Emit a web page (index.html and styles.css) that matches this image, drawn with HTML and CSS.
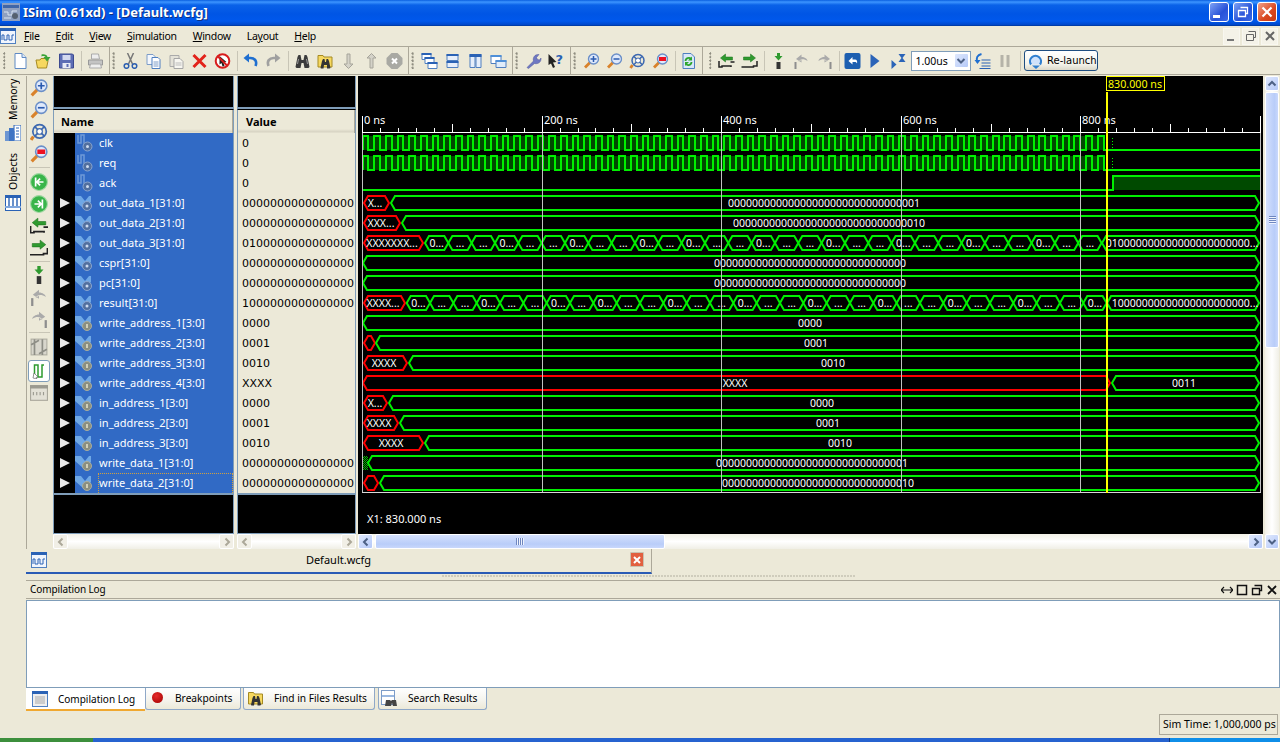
FILE: index.html
```html
<!DOCTYPE html>
<html>
<head>
<meta charset="utf-8">
<title>ISim (0.61xd) - [Default.wcfg]</title>
<link rel="stylesheet" href="styles.css">
<script src="wave.js"></script>
</head>
<body>

<svg class="defs" width="0" height="0">
  <symbol id="i-new" viewBox="0 0 16 16"><path d="M2.5.5h7l4 4v11h-11z" fill="#fff" stroke="#5f8ac4"/><path d="M9.5.5v4h4" fill="#dce8f8" stroke="#5f8ac4"/></symbol>
  <symbol id="i-open" viewBox="0 0 16 16"><path d="M.5 7h4l1-1.5h7V8l-1.5 7H2z" fill="#f6d860" stroke="#a58a22"/><path d="M6 1.5c3.5-.5 5.500.5 6 2.500h3l-3.500 4.500L8 4h2c-.5-1-2-1.200-4-.5z" fill="#39a336"/></symbol>
  <symbol id="i-save" viewBox="0 0 16 16"><path d="M1 1h13l1 1v13H1z" fill="#5d6db5" stroke="#3c4a90"/><rect x="4" y="2" width="8" height="5" fill="#d3d9f0"/><rect x="4" y="10" width="8" height="5" fill="#e8eaf5"/><rect x="8" y="11" width="2" height="3" fill="#5d6db5"/></symbol>
  <symbol id="i-print" viewBox="0 0 16 16"><path d="M4 1h7l1 5H4z" fill="#eee" stroke="#aaa"/><path d="M1 7h14v5H1z" fill="#c4c4c4" stroke="#999"/><path d="M3 11h10l1 4H2z" fill="#eee" stroke="#aaa"/></symbol>
  <symbol id="i-cut" viewBox="0 0 16 16"><path d="M5 0l5 11M11 0L6 11" stroke="#777" stroke-width="1.5" fill="none"/><circle cx="4" cy="13" r="2.3" fill="none" stroke="#2d5fb0" stroke-width="1.5"/><circle cx="12" cy="13" r="2.3" fill="none" stroke="#2d5fb0" stroke-width="1.5"/></symbol>
  <symbol id="i-copy" viewBox="0 0 16 16"><path d="M1.5 1.5h6l2 2v8h-8z" fill="#f4f7fc" stroke="#7c9cc8"/><path d="M6.5 4.500h6l2 2v9h-8z" fill="#fff" stroke="#4f7fc0"/><path d="M8 9h5M8 11h5M8 13h5" stroke="#7c9cc8"/></symbol>
  <symbol id="i-paste" viewBox="0 0 16 16"><path d="M1.5 2.500h9v11h-9z" fill="#e4e2d8" stroke="#aaa"/><path d="M5.5 5.500h6l3 3v7h-9z" fill="#f7f6f0" stroke="#a5a5a5"/><path d="M7 10h6M7 12h6" stroke="#bbb"/></symbol>
  <symbol id="i-del" viewBox="0 0 16 16"><path d="M2 2l12 12M14 2L2 14" stroke="#e2231a" stroke-width="3" fill="none"/></symbol>
  <symbol id="i-nobp" viewBox="0 0 16 16"><circle cx="8" cy="8" r="6.8" fill="#fff" stroke="#d81e1e" stroke-width="2"/><path d="M5 3l7 6-3 .5 1 3.500-2 .5-1-3.500-2 1.500z" fill="#222"/><path d="M3 3l10 10" stroke="#d81e1e" stroke-width="2"/></symbol>
  <symbol id="i-undo" viewBox="0 0 16 16"><path d="M13 13c2-5-1-8-5-8H5" stroke="#1f6fd0" stroke-width="2.6" fill="none"/><path d="M6.5.5L1 5l5.500 4.500z" fill="#1f6fd0"/></symbol>
  <symbol id="i-redo" viewBox="0 0 16 16"><path d="M3 13C1 8 4 5 8 5h3" stroke="#a0a0a0" stroke-width="2.6" fill="none"/><path d="M9.5.5L15 5l-5.500 4.500z" fill="#a0a0a0"/></symbol>
  <symbol id="i-bino" viewBox="0 0 16 16"><path d="M1 14l2-10 1-2h2l1 5h2l1-5h2l1 2 2 10-1 1h-4l-1-5H7l-1 5H2z" fill="#3b3b3b"/><path d="M3 11l1-5M12 6l1 5" stroke="#9a9a9a" fill="none"/></symbol>
  <symbol id="i-fbino" viewBox="0 0 16 16"><path d="M.5 2.500h5l1 1.500h8v10H.5z" fill="#f6d860" stroke="#a58a22"/><path d="M3 15l1.500-7 1-2h1.500l.5 3h1l.5-3h1.500l1 2 1.500 7-1 .5h-2.500L9.500 12h-3L6 15.500H3.500z" fill="#333"/></symbol>
  <symbol id="i-down" viewBox="0 0 16 16"><path d="M6.5 1h3v10h3L8 15.500 3.500 11h3z" fill="#d4d2c8" stroke="#a6a49a"/></symbol>
  <symbol id="i-up" viewBox="0 0 16 16"><path d="M6.5 15h3V5h3L8 .5 3.500 5h3z" fill="#d4d2c8" stroke="#a6a49a"/></symbol>
  <symbol id="i-stop" viewBox="0 0 16 16"><path d="M5 0h6l5 5v6l-5 5H5l-5-5V5z" fill="#a9a9a3"/><path d="M5.5 5.500l5 5M10.500 5.500l-5 5" stroke="#fff" stroke-width="2"/></symbol>
  <symbol id="i-cascade" viewBox="0 0 16 16"><path d="M.5.5h9v6h-9z" fill="#fff" stroke="#4f7fc0"/><rect y="0" width="10" height="2" fill="#2a62b5"/><path d="M3.5 4.500h9v6h-9z" fill="#fff" stroke="#4f7fc0"/><rect x="3" y="4" width="10" height="2" fill="#2a62b5"/><path d="M6.5 9.500h9v6h-9z" fill="#fff" stroke="#4f7fc0"/><rect x="6" y="9" width="10" height="2" fill="#2a62b5"/></symbol>
  <symbol id="i-tileh" viewBox="0 0 16 16"><path d="M2.5 1.500h11v6h-11zM2.500 8.500h11v6h-11z" fill="#e6eefa" stroke="#4f7fc0"/><rect x="2" y="1" width="12" height="2" fill="#2a62b5"/><rect x="2" y="8" width="12" height="2" fill="#2a62b5"/></symbol>
  <symbol id="i-tilev" viewBox="0 0 16 16"><path d="M2.5 1.500h5v13h-5zM8.500 1.500h5v13h-5z" fill="#e6eefa" stroke="#4f7fc0"/><rect x="2" y="1" width="12" height="3" fill="#2a62b5"/></symbol>
  <symbol id="i-wins" viewBox="0 0 16 16"><path d="M.5 2.500h10v8H.5z" fill="#fff" stroke="#4f7fc0"/><rect y="2" width="11" height="2" fill="#4f90d8"/><path d="M5.5 7.500h10v7h-10z" fill="#e0ecfa" stroke="#4f7fc0"/><rect x="5" y="7" width="11" height="2" fill="#4f90d8"/></symbol>
  <symbol id="i-wrench" viewBox="0 0 16 16"><path d="M1.5 14.500L8 8c-1-3 1-7 5.500-6.500L11 4.500l1 2 2 .5L15.500 5c.5 4-3 6.500-6.500 5.500L3 15.500z" fill="#6f78c2" stroke="#4d5598" stroke-width=".5"/></symbol>
  <symbol id="i-lens" viewBox="0 0 16 16"><path d="M6.5 9.500L1.500 14.500" stroke="#d9822b" stroke-width="2.8"/><circle cx="10" cy="6" r="5" fill="#dfe9fb" stroke="#6b8fc8" stroke-width="1.4"/></symbol>
  <symbol id="i-zin" viewBox="0 0 16 16"><use href="#i-lens"/><path d="M7 6h6M10 3v6" stroke="#2b5bb0" stroke-width="1.5"/></symbol>
  <symbol id="i-zout" viewBox="0 0 16 16"><use href="#i-lens"/><path d="M7 6h6" stroke="#2b5bb0" stroke-width="1.5"/></symbol>
  <symbol id="i-zfit" viewBox="0 0 16 16"><path d="M3 12L1 15" stroke="#d9822b" stroke-width="2.8"/><circle cx="8.500" cy="7.500" r="6" fill="none" stroke="#3d68b0" stroke-width="1.5"/><circle cx="8.500" cy="7.500" r="2.500" fill="#fff" stroke="#3d68b0"/><path d="M4.500 3.500l2.500 2.500M12.500 3.500L10 6M4.500 11.500L7 9M12.500 11.500L10 9" stroke="#3d68b0" stroke-width="1.5"/></symbol>
  <symbol id="i-zred" viewBox="0 0 16 16"><use href="#i-lens"/><rect x="6.500" y="4" width="7" height="4" fill="#ee1122"/></symbol>
  <symbol id="i-refresh" viewBox="0 0 16 16"><path d="M2.5.5h8l3.500 3.500v11.500H2.500z" fill="#d9e7f9" stroke="#4f7fc0"/><path d="M5 8c0-3 4-4 5.500-2M11 9c0 3-4 4-5.500 2" stroke="#2da52d" stroke-width="1.8" fill="none"/><path d="M11.5 3.500v4h-4zM4.500 13v-4h4z" fill="#2da52d"/></symbol>
  <symbol id="i-stepl" viewBox="0 0 16 16"><path d="M.5 8v6h3v-1h9v1M12 9h4" stroke="#222" stroke-width="1.5" fill="none"/><path d="M7 1L2 5l5 4V7h7V4H7z" fill="#2f9a2f" stroke="#1b701b" stroke-width=".5"/></symbol>
  <symbol id="i-stepr" viewBox="0 0 16 16"><path d="M0 14h12v-1h3.500V8" stroke="#222" stroke-width="1.5" fill="none"/><path d="M9 1l5 4-5 4V7H2V4h7z" fill="#2f9a2f" stroke="#1b701b" stroke-width=".5"/></symbol>
  <symbol id="i-dnmark" viewBox="0 0 16 16"><path d="M6.5 0h3v3h2.500L8 7.500 4 3h2.500z" fill="#2f9a2f"/><rect x="6" y="9" width="4" height="7" fill="#333"/></symbol>
  <symbol id="i-curvel" viewBox="0 0 16 16"><rect x="1" y="9" width="2" height="7" fill="#8e8e8e"/><path d="M5 9c1-3 5-4 9-1 0-2-3-4-6-4V1.500L2.500 6 8 9.500V7c-1 0-2 1-3 2z" fill="#aaa"/></symbol>
  <symbol id="i-curver" viewBox="0 0 16 16"><rect x="13" y="9" width="2" height="7" fill="#8e8e8e"/><path d="M11 9c-1-3-5-4-9-1 0-2 3-4 6-4V1.500L13.500 6 8 9.500V7c1 0 2 1 3 2z" fill="#aaa"/></symbol>
  <symbol id="i-restart" viewBox="0 0 16 16"><rect width="16" height="16" rx="2" fill="#1d5fb0"/><path d="M4 8l4-4v2.500h2.500c2 0 2.500 2 2 4-.5-1-1-1.500-2-1.500H8V11.500z" fill="#fff"/></symbol>
  <symbol id="i-run" viewBox="0 0 16 16"><path d="M3 1l9 7-9 7z" fill="#2b64b8"/></symbol>
  <symbol id="i-runfor" viewBox="0 0 16 16"><path d="M1 7l5 4.500L1 16z" fill="#2b64b8"/><path d="M8 1h7l-3 4 3 4H8l3-4z" fill="#2b64b8"/></symbol>
  <symbol id="i-stepin" viewBox="0 0 16 16"><path d="M7 1C3 2 1 5 3 9" stroke="#1f6fd0" stroke-width="2" fill="none"/><path d="M0 7h6l-3 4z" fill="#1f6fd0"/><path d="M7 7h9M7 10h9M7 13h9M5 15.500h11" stroke="#2a62b5"/></symbol>
  <symbol id="i-pause" viewBox="0 0 16 16"><rect x="3" y="2" width="3" height="12" fill="#b5b3a8"/><rect x="9" y="2" width="3" height="12" fill="#b5b3a8"/></symbol>
  <symbol id="i-relaunch" viewBox="0 0 16 16"><path d="M3 11.500a5.500 5.500 0 1 1 9 0" fill="#cfe2fb" stroke="#2f7fd0" stroke-width="2.2"/><path d="M8 16l-4-3.500h8z" fill="#2f7fd0"/></symbol>
  <symbol id="i-gol" viewBox="0 0 16 16"><circle cx="8" cy="8" r="7.5" fill="#39b54a" stroke="#a5d9a5"/><path d="M5 4v8M12 8H6M9 5L6 8l3 3" stroke="#fff" stroke-width="1.5" fill="none"/></symbol>
  <symbol id="i-gor" viewBox="0 0 16 16"><circle cx="8" cy="8" r="7.5" fill="#39b54a" stroke="#a5d9a5"/><path d="M11 4v8M4 8h6M7 5l3 3-3 3" stroke="#fff" stroke-width="1.5" fill="none"/></symbol>
  <symbol id="i-snap" viewBox="0 0 16 16"><rect x="1" y="1" width="14" height="14" fill="#d8d6cc" stroke="#b0aea2"/><path d="M4 1v14M11 1v14M1 6l7-4M15 10l-7 4" stroke="#8e8e86" fill="none" stroke-width="1.5"/></symbol>
  <symbol id="i-wave" viewBox="0 0 16 16"><path d="M3.500 14V2H7v12h4V2h2" stroke="#2e9a2e" stroke-width="1.5" fill="none"/><path d="M2 15l1-5 4 4-2 .5 1 1.500z" fill="#fff" stroke="#555" stroke-width=".6"/></symbol>
  <symbol id="i-marker" viewBox="0 0 16 16"><rect x=".5" y="1.500" width="15" height="13" fill="#e3e1d6" stroke="#aaa89c"/><rect y="1" width="16" height="3" fill="#9b9a90"/><path d="M3 7v3M6 7v3M9 7v3M12 7v3" stroke="#9b9a90"/></symbol>
  <symbol id="i-wcfg" viewBox="0 0 16 16"><rect x=".5" y=".5" width="15" height="15" fill="#f0f5fd" stroke="#4f7fc0"/><rect width="16" height="3" fill="#2a62b5"/><path d="M2 12V7h2v5h3V7h2v5h3V7h2" stroke="#2a62b5" fill="none"/></symbol>
  <symbol id="i-mem" viewBox="0 0 16 16"><rect x="9" y="0" width="7" height="16" fill="#fff" stroke="#2a62b5"/><rect x="0" y="6" width="10" height="10" fill="#6d96d2"/><rect x="4" y="3" width="5" height="13" fill="#3f74c4"/><path d="M11 3h3M11 6h3M11 9h3M11 12h3" stroke="#2a62b5"/></symbol>
  <symbol id="i-obj" viewBox="0 0 16 16"><rect x=".5" y=".5" width="15" height="15" fill="#fff" stroke="#2a62b5"/><rect width="16" height="3" fill="#2a62b5"/><path d="M4 3v10M8 3v10M12 3v10" stroke="#2a62b5" stroke-width="1.4"/><rect y="11" width="16" height="2" fill="#7fa6dc"/></symbol>
  <symbol id="i-sig" viewBox="0 0 18 18"><path d="M3 1v8h3V1h3v10" stroke="#6f9ad8" stroke-width="1.5" fill="none"/><circle cx="12.500" cy="12.500" r="4.500" fill="#52709f" stroke="#8aa5cf"/><circle cx="12.500" cy="12.500" r="1.500" fill="#cfdcf0"/></symbol>
  <symbol id="i-bus" viewBox="0 0 18 18"><path d="M0 2h6l4 5 4-5h2v6l-5 6H8L0 7z" fill="#6fa8e6"/><circle cx="12" cy="12" r="4.500" fill="#52709f" stroke="#8aa5cf"/><circle cx="12" cy="12" r="1.500" fill="#cfdcf0"/></symbol>
  <symbol id="i-num" viewBox="0 0 18 18"><path d="M0 2h6l4 5 4-5h2v6l-5 6H8L0 7z" fill="#6fa8e6"/><circle cx="12" cy="12" r="4.500" fill="#8b8f80" stroke="#a9ad9e"/><path d="M12 10v4" stroke="#e8e6cc" stroke-width="1.5"/></symbol>
  <symbol id="i-log" viewBox="0 0 16 16"><rect x=".5" y=".5" width="15" height="15" fill="#eee" stroke="#4f7fc0"/><rect width="16" height="3" fill="#2a62b5"/><path d="M3 6h10M3 8h10M3 10h10M3 12h10" stroke="#aaa"/></symbol>
  <symbol id="i-search" viewBox="0 0 16 16"><rect x=".5" y=".5" width="13" height="14" fill="#fff" stroke="#7c9cc8"/><rect x="1" y="5" width="12" height="2" fill="#9ab8e0"/><path d="M5 10h4l1 1 1-1h4l1 6h-4l-1-3-1 3H4z" fill="#444"/></symbol>
</svg>

<div class="titlebar">
  <svg class="title-ic" viewBox="0 0 18 18"><rect width="18" height="18" fill="#8fa0c0"/><rect x="1" y="2" width="16" height="3" fill="#3f66a8"/><path d="M2 9h4v3h4V8h5M2 15h7" stroke="#d8e2f0" fill="none"/><circle cx="13" cy="13" r="3" fill="#55606f"/></svg>
  <span class="title-text">ISim (0.61xd) - [Default.wcfg]</span>
  <span class="win-btn"><span class="glyph-min"></span></span>
  <span class="win-btn"><svg viewBox="0 0 12 12" width="12" height="12"><path d="M3.5 1.500h7v6h-2M1.500 4.500h7v6h-7z" fill="none" stroke="#fff" stroke-width="1.3"/></svg></span>
  <span class="win-btn win-close"><svg viewBox="0 0 12 12" width="12" height="12"><path d="M1.5 1.500l9 9M10.500 1.500l-9 9" stroke="#fff" stroke-width="2.2"/></svg></span>
</div>

<div class="menubar">
  <svg class="menu-ic"><use href="#i-wcfg"/></svg>
  <span class="menu-item"><u>F</u>ile</span>
  <span class="menu-item"><u>E</u>dit</span>
  <span class="menu-item"><u>V</u>iew</span>
  <span class="menu-item"><u>S</u>imulation</span>
  <span class="menu-item"><u>W</u>indow</span>
  <span class="menu-item">La<u>y</u>out</span>
  <span class="menu-item"><u>H</u>elp</span>
  <span class="mdi">
    <span class="mdi-btn"><svg viewBox="0 0 12 12" width="12" height="12"><path d="M1 10h7" stroke="#777" stroke-width="2"/></svg></span>
    <span class="mdi-btn"><svg viewBox="0 0 12 12" width="12" height="12"><path d="M3.5 1.500h7v6h-2M1.500 4.500h7v6h-7z" fill="none" stroke="#666"/></svg></span>
    <span class="mdi-btn"><svg viewBox="0 0 12 12" width="12" height="12"><path d="M2 2l8 8M10 2l-8 8" stroke="#666" stroke-width="2"/></svg></span>
  </span>
</div>

<div class="toolbar">
  <div class="tgroup">
    <i class="grip"></i>
    <svg class="tool"><use href="#i-new"/></svg>
    <svg class="tool"><use href="#i-open"/></svg>
    <svg class="tool"><use href="#i-save"/></svg>
    <i class="tsep"></i>
    <svg class="tool"><use href="#i-print"/></svg>
  </div>
  <div class="tgroup">
    <i class="grip"></i>
    <svg class="tool"><use href="#i-cut"/></svg>
    <svg class="tool"><use href="#i-copy"/></svg>
    <svg class="tool"><use href="#i-paste"/></svg>
    <svg class="tool"><use href="#i-del"/></svg>
    <svg class="tool"><use href="#i-nobp"/></svg>
    <i class="tsep"></i>
    <svg class="tool"><use href="#i-undo"/></svg>
    <svg class="tool"><use href="#i-redo"/></svg>
    <i class="tsep"></i>
    <svg class="tool"><use href="#i-bino"/></svg>
    <svg class="tool"><use href="#i-fbino"/></svg>
    <svg class="tool"><use href="#i-down"/></svg>
    <svg class="tool"><use href="#i-up"/></svg>
    <svg class="tool"><use href="#i-stop"/></svg>
  </div>
  <div class="tgroup">
    <i class="grip"></i>
    <svg class="tool"><use href="#i-cascade"/></svg>
    <svg class="tool"><use href="#i-tileh"/></svg>
    <svg class="tool"><use href="#i-tilev"/></svg>
    <svg class="tool"><use href="#i-wins"/></svg>
  </div>
  <div class="tgroup">
    <i class="grip"></i>
    <svg class="tool"><use href="#i-wrench"/></svg>
    <svg class="tool" viewBox="-3.5 0 23 16"><path d="M0 1l8 8-3.500.5 2 4.500-2 1-2-4.500L0 12z" fill="#222"/><text x="7" y="11" class="ic-q">?</text></svg>
  </div>
  <div class="tgroup">
    <i class="grip"></i>
    <svg class="tool"><use href="#i-zin"/></svg>
    <svg class="tool"><use href="#i-zout"/></svg>
    <svg class="tool"><use href="#i-zfit"/></svg>
    <svg class="tool"><use href="#i-zred"/></svg>
    <i class="tsep"></i>
    <svg class="tool"><use href="#i-refresh"/></svg>
  </div>
  <div class="tgroup tgroup-last">
    <i class="grip"></i>
    <svg class="tool"><use href="#i-stepl"/></svg>
    <svg class="tool"><use href="#i-stepr"/></svg>
    <i class="tsep"></i>
    <svg class="tool"><use href="#i-dnmark"/></svg>
    <svg class="tool"><use href="#i-curvel"/></svg>
    <svg class="tool"><use href="#i-curver"/></svg>
    <i class="tsep"></i>
    <svg class="tool"><use href="#i-restart"/></svg>
    <svg class="tool"><use href="#i-run"/></svg>
    <svg class="tool"><use href="#i-runfor"/></svg>
    <span class="combo"><span class="combo-val">1.00us</span><span class="sb-btn combo-btn"><svg viewBox="0 0 10 10" width="10" height="10"><path d="M1.5 3L5 6.500 8.500 3" class="sb-arrow"/></svg></span></span>
    <svg class="tool"><use href="#i-stepin"/></svg>
    <svg class="tool"><use href="#i-pause"/></svg>
    <i class="tsep"></i>
    <span class="relaunch"><svg class="ic"><use href="#i-relaunch"/></svg>Re-launch</span>
  </div>
</div>

<div class="main">
  <div class="sidetabs">
    <span class="vtab">Memory</span>
    <svg class="ic side-ic"><use href="#i-mem"/></svg>
    <span class="vtab">Objects</span>
    <svg class="ic side-ic"><use href="#i-obj"/></svg>
  </div>

  <div class="toolstrip">
    <svg class="tool-v"><use href="#i-zin"/></svg>
    <svg class="tool-v"><use href="#i-zout"/></svg>
    <svg class="tool-v"><use href="#i-zfit"/></svg>
    <svg class="tool-v"><use href="#i-zred"/></svg>
    <i class="vsep"></i>
    <svg class="tool-v"><use href="#i-gol"/></svg>
    <svg class="tool-v"><use href="#i-gor"/></svg>
    <svg class="tool-v"><use href="#i-stepl"/></svg>
    <svg class="tool-v"><use href="#i-stepr"/></svg>
    <i class="vsep"></i>
    <svg class="tool-v"><use href="#i-dnmark"/></svg>
    <svg class="tool-v"><use href="#i-curvel"/></svg>
    <svg class="tool-v"><use href="#i-curver"/></svg>
    <i class="vsep"></i>
    <svg class="tool-v"><use href="#i-snap"/></svg>
    <span class="tool-on"><svg class="ic"><use href="#i-wave"/></svg></span>
    <svg class="tool-v"><use href="#i-marker"/></svg>
  </div>

  <div class="pane pane-name">
    <div class="pane-top"></div>
    <div class="sig-table">
      <div class="sig-head">Name</div>
      <ul class="sig-list">
        <li class="sig"><span class="sig-gut"></span><svg class="sig-ic"><use href="#i-sig"/></svg><span class="sig-name">clk</span></li>
        <li class="sig"><span class="sig-gut"></span><svg class="sig-ic"><use href="#i-sig"/></svg><span class="sig-name">req</span></li>
        <li class="sig"><span class="sig-gut"></span><svg class="sig-ic"><use href="#i-sig"/></svg><span class="sig-name">ack</span></li>
        <li class="sig"><span class="sig-gut"><b></b></span><svg class="sig-ic"><use href="#i-bus"/></svg><span class="sig-name">out_data_1[31:0]</span></li>
        <li class="sig"><span class="sig-gut"><b></b></span><svg class="sig-ic"><use href="#i-bus"/></svg><span class="sig-name">out_data_2[31:0]</span></li>
        <li class="sig"><span class="sig-gut"><b></b></span><svg class="sig-ic"><use href="#i-bus"/></svg><span class="sig-name">out_data_3[31:0]</span></li>
        <li class="sig"><span class="sig-gut"><b></b></span><svg class="sig-ic"><use href="#i-bus"/></svg><span class="sig-name">cspr[31:0]</span></li>
        <li class="sig"><span class="sig-gut"><b></b></span><svg class="sig-ic"><use href="#i-bus"/></svg><span class="sig-name">pc[31:0]</span></li>
        <li class="sig"><span class="sig-gut"><b></b></span><svg class="sig-ic"><use href="#i-bus"/></svg><span class="sig-name">result[31:0]</span></li>
        <li class="sig"><span class="sig-gut"><b></b></span><svg class="sig-ic"><use href="#i-num"/></svg><span class="sig-name">write_address_1[3:0]</span></li>
        <li class="sig"><span class="sig-gut"><b></b></span><svg class="sig-ic"><use href="#i-num"/></svg><span class="sig-name">write_address_2[3:0]</span></li>
        <li class="sig"><span class="sig-gut"><b></b></span><svg class="sig-ic"><use href="#i-num"/></svg><span class="sig-name">write_address_3[3:0]</span></li>
        <li class="sig"><span class="sig-gut"><b></b></span><svg class="sig-ic"><use href="#i-num"/></svg><span class="sig-name">write_address_4[3:0]</span></li>
        <li class="sig"><span class="sig-gut"><b></b></span><svg class="sig-ic"><use href="#i-num"/></svg><span class="sig-name">in_address_1[3:0]</span></li>
        <li class="sig"><span class="sig-gut"><b></b></span><svg class="sig-ic"><use href="#i-num"/></svg><span class="sig-name">in_address_2[3:0]</span></li>
        <li class="sig"><span class="sig-gut"><b></b></span><svg class="sig-ic"><use href="#i-num"/></svg><span class="sig-name">in_address_3[3:0]</span></li>
        <li class="sig"><span class="sig-gut"><b></b></span><svg class="sig-ic"><use href="#i-num"/></svg><span class="sig-name">write_data_1[31:0]</span></li>
        <li class="sig"><span class="sig-gut"><b></b></span><svg class="sig-ic"><use href="#i-num"/></svg><span class="sig-name sig-focus">write_data_2[31:0]</span></li>
      </ul>
    </div>
    <div class="pane-foot"></div>
    <div class="hscroll hscroll-off"><span class="sb-btn"><svg viewBox="0 0 10 10" width="10" height="10"><path d="M6.5 1.500L3 5l3.500 3.500" class="sb-arrow"/></svg></span><span class="sb-track"></span><span class="sb-btn"><svg viewBox="0 0 10 10" width="10" height="10"><path d="M3.5 1.500L7 5 3.500 8.500" class="sb-arrow"/></svg></span></div>
  </div>

  <div class="pane pane-value">
    <div class="pane-top"></div>
    <div class="sig-table">
      <div class="sig-head sig-head-val">Value</div>
      <ul class="val-list">
        <li>0</li>
        <li>0</li>
        <li>0</li>
        <li>0000000000000000</li>
        <li>0000000000000000</li>
        <li>0100000000000000</li>
        <li>0000000000000000</li>
        <li>0000000000000000</li>
        <li>1000000000000000</li>
        <li>0000</li>
        <li>0001</li>
        <li>0010</li>
        <li>XXXX</li>
        <li>0000</li>
        <li>0001</li>
        <li>0010</li>
        <li>0000000000000000</li>
        <li>0000000000000000</li>
      </ul>
    </div>
    <div class="pane-foot"></div>
    <div class="hscroll hscroll-off"><span class="sb-btn"><svg viewBox="0 0 10 10" width="10" height="10"><path d="M6.5 1.500L3 5l3.500 3.500" class="sb-arrow"/></svg></span><span class="sb-track"></span><span class="sb-btn"><svg viewBox="0 0 10 10" width="10" height="10"><path d="M3.5 1.500L7 5 3.500 8.500" class="sb-arrow"/></svg></span></div>
  </div>

  <div class="pane pane-wave">
    <svg id="wave" class="wave" viewBox="358 76 905 458" width="905" height="458">
      <defs>
        <pattern id="hatch" width="2" height="2" patternUnits="userSpaceOnUse"><rect width="1" height="1" fill="#00c000"/><rect x="1" y="1" width="1" height="1" fill="#00c000"/></pattern>
      </defs>
    </svg>
    <div class="hscroll"><span class="sb-btn"><svg viewBox="0 0 10 10" width="10" height="10"><path d="M6.5 1.500L3 5l3.500 3.500" class="sb-arrow"/></svg></span><span class="sb-thumb"><i></i></span><span class="sb-track"></span><span class="sb-btn"><svg viewBox="0 0 10 10" width="10" height="10"><path d="M3.5 1.500L7 5 3.500 8.500" class="sb-arrow"/></svg></span></div>
  </div>

  <div class="vscroll">
    <span class="sb-btn"><svg viewBox="0 0 10 10" width="10" height="10"><path d="M1.5 6.500L5 3l3.500 3.500" class="sb-arrow"/></svg></span>
    <span class="sb-thumb-v"><i></i></span>
    <span class="sb-track"></span>
    <span class="sb-btn"><svg viewBox="0 0 10 10" width="10" height="10"><path d="M1.5 3L5 6.500 8.500 3" class="sb-arrow"/></svg></span>
  </div>
</div>

<div class="lower">
  <div class="doc-tabs">
    <div class="doc-tab">
      <svg class="ic"><use href="#i-wcfg"/></svg>
      <span class="doc-name">Default.wcfg</span>
      <span class="doc-close"><svg viewBox="0 0 10 10" width="10" height="10"><path d="M2 2l6 6M8 2L2 8" stroke="#fff" stroke-width="2"/></svg></span>
    </div>
  </div>
  <div class="split-dots"></div>
  <div class="log-head">
    <span class="log-title">Compilation Log</span>
    <span class="log-ctl">
      <svg viewBox="0 0 12 12" width="12" height="12"><path d="M0 6h12M3 3L0 6l3 3M9 3l3 3-3 3" fill="none" stroke="#111" stroke-width="1.2"/></svg>
      <svg viewBox="0 0 12 12" width="12" height="12"><path d="M1.5 1.500h9v9h-9z" fill="none" stroke="#111" stroke-width="1.5"/></svg>
      <svg viewBox="0 0 12 12" width="12" height="12"><path d="M3.5 1.500h7v5h-2M1.500 4.500h7v6h-7z" fill="none" stroke="#111" stroke-width="1.4"/></svg>
      <svg viewBox="0 0 12 12" width="12" height="12"><path d="M2 2l8 8M10 2l-8 8" stroke="#111" stroke-width="1.8"/></svg>
    </span>
  </div>
  <div class="log-body"></div>
  <div class="log-tabs">
    <span class="log-tab log-tab-on"><svg class="ic"><use href="#i-log"/></svg>Compilation Log</span>
    <span class="log-tab log-tab-bp"><i class="bp-dot"></i>Breakpoints</span>
    <span class="log-tab log-tab-find"><svg class="ic"><use href="#i-fbino"/></svg>Find in Files Results</span>
    <span class="log-tab log-tab-search"><svg class="ic"><use href="#i-search"/></svg>Search Results</span>
  </div>
</div>

<div class="status"><span class="sim-time">Sim Time: 1,000,000 ps</span></div>
<div class="taskbar"><i class="start"></i><i class="tray"></i></div>

</body>
</html>
```

FILE: styles.css
```css
* { padding: 0; margin: 0; box-sizing: border-box; }
li { list-style: none; }
i { display: block; }

html, body { width: 1280px; height: 742px; overflow: hidden; }
body { background: #ece9d8; font-family: "Noto Sans", "DejaVu Sans", sans-serif; font-size: 11px; color: #000; }

.defs { position: absolute; }
.ic { width: 16px; height: 16px; flex: none; }
.ic-q { font: bold 13px "DejaVu Sans", sans-serif; fill: #2a62b5; }

/* title bar */
.titlebar { height: 26px; display: flex; align-items: center; padding: 0 3px 1px 2px; gap: 4px; border-bottom: 1px solid #003ca8;
  background: linear-gradient(#0a5fe0 0, #3d95ff 2px, #0a62e8 5px, #0055e5 14px, #0058ec 21px, #0046c8 25px); }
.title-ic { width: 18px; height: 18px; }
.title-text { flex: 1; margin-left: -1px; color: #fff; font-weight: bold; font-size: 13px; text-shadow: 1px 1px #0f2f80; }
.win-btn { width: 20px; height: 20px; border: 1px solid #fff; border-radius: 3px; display: flex; align-items: center; justify-content: center;
  background: linear-gradient(135deg, #7ea2f5, #2752d8 60%, #3a68e6); }
.glyph-min { width: 7px; height: 3px; background: #fff; margin: 8px 5px 0 0; }
.win-close { background: linear-gradient(135deg, #f0a089, #d9481f 60%, #c83a14); }

/* menu */
.menubar { height: 21px; display: flex; align-items: center; border-bottom: 1px solid #aca899; }
.menu-ic { width: 16px; height: 16px; flex: none; margin-right: 8px; }
.menu-item { margin-right: 16px; font-size: 10.5px; letter-spacing: -0.3px; }
.mdi { margin-left: auto; display: flex; gap: 2px; padding-right: 2px; }
.mdi-btn { width: 17px; height: 17px; background: #f4f2e8; border: 1px solid #f8f7f0; display: flex; align-items: center; justify-content: center; }

/* toolbar */
.toolbar { height: 28px; display: flex; border-bottom: 1px solid #aca899; }
.tgroup { display: flex; align-items: center; height: 27px; padding: 0 2px 0 2.5px; border-right: 1px solid #aca899; }
.tgroup-last { border-right: 0; padding-left: 5.5px; }
.grip { width: 6.5px; height: 18px; background: radial-gradient(circle at 1.5px 1.5px, #8f8d80 1px, transparent 1.3px) 0 0 / 6.5px 3.6px; }
.tool { width: 23px; height: 16px; flex: none; }
.tsep { width: 5.5px; height: 20px; flex: none; background: linear-gradient(#c8c5b6, #c8c5b6) 3px 0 / 1px 100% no-repeat; }

.combo { width: 60px; height: 20px; display: flex; align-items: center; border: 1px solid #7f9db9; background: #fff; flex: none; margin-left: 0.5px; padding-right: 1px; }
.combo-val { flex: 1; padding-left: 4px; font-size: 10.5px; }
.combo-btn { height: 16px; }
.relaunch { width: 74px; height: 21px; display: flex; align-items: center; gap: 3px; padding-left: 3px; border: 1px solid #1e4d80; border-radius: 3px; background: linear-gradient(#fff, #f3f2ea 70%, #dcd9ca); flex: none; margin-left: 2px; font-family: "DejaVu Sans", sans-serif; font-size: 10px; }

/* main area */
.main { height: 473px; display: flex; margin-top: 1px; }

.sidetabs { width: 26px; display: flex; flex-direction: column; align-items: center; padding-top: 4px; }
.vtab { writing-mode: vertical-rl; transform: rotate(180deg); font-size: 10.5px; height: 40px; text-align: left; }
.side-ic { margin: 5px 0 9px; }

.toolstrip { width: 27px; border-left: 1px solid #aca899; display: flex; flex-direction: column; align-items: center; padding: 3px 2px 0 0; }
.tool-v { width: 18px; height: 18px; margin-bottom: 4px; flex: none; }
.vsep { width: 21px; height: 1px; background: #c8c5b6; margin: 0 0 4px; flex: none; }
.vsep + .tool-v { margin-top: 0.5px; }
.tool-on { width: 22px; height: 22px; margin: 0 0 2px; border: 1px solid #7f9db9; border-radius: 3px; background: #fff; display: flex; align-items: center; justify-content: center; flex: none; }

.pane { display: flex; flex-direction: column; flex: none; }
.pane-name { width: 181px; margin-right: 3px; }
.pane-value { width: 119px; margin-right: 2px; }
.pane-wave { width: 905px; }
.pane-top { height: 33px; background: #000; border: 1px solid #7f9db9; border-width: 0 1px 2px; }
.pane-foot { height: 41px; background: #000; border: 1px solid #7f9db9; border-width: 2px 1px 1px; }

.sig-table { border: 1px solid #000; border-width: 1px 1px 0; height: 384px; background: #000; border-left-color: #7f9db9; border-right-color: #7f9db9; }
.sig-head { height: 23px; padding: 4px 0 0 7px; background: linear-gradient(#ece9d8 19px, #d6d2c2 22px, #ece9d8); font-weight: bold; box-shadow: inset -1px 0 #aca899; line-height: 15px; }
.sig-head-val { padding-left: 8px; }
.sig { height: 20px; display: flex; align-items: center; background: #316ac5; }
.sig-gut { width: 21px; height: 20px; flex: none; background: #000; display: flex; align-items: center; padding-left: 6px; }
.sig-gut b { width: 0; height: 0; border-left: 10px solid #e8e8e8; border-top: 5.5px solid transparent; border-bottom: 5.5px solid transparent; }
.sig-ic { width: 18px; height: 18px; flex: none; }
.sig-name { flex: 1; height: 20px; line-height: 19px; color: #fff; padding-left: 6px; white-space: nowrap; }
.sig-focus { border: 1px dotted #d0a040; border-bottom: 0; padding-left: 0; margin-left: 5px; line-height: 18px; }

.val-list li { height: 20px; line-height: 21px; background: #ece9d8; padding-left: 4px; white-space: nowrap; font-family: "DejaVu Sans", sans-serif; font-size: 11px; width: 117px; }

.wave { display: block; background: #000; }
.wave text { fill: #fff; font-family: "Noto Sans", sans-serif; font-size: 10.5px; }
.wave .ruler-txt { font-size: 11px; }
.wave .cur-txt { fill: #ff0; font-size: 10.7px; }

/* scroll bars */
.hscroll { height: 15px; display: flex; background: linear-gradient(#f3f1e7, #fff 50%, #f0efe6); }
.hscroll .sb-track { flex: 1; }
.sb-btn { width: 15px; height: 15px; flex: none; display: flex; align-items: center; justify-content: center; background: linear-gradient(135deg, #dfe8fd, #b5c9f8); border: 1px solid #fff; border-radius: 2px; }
.sb-arrow { fill: none; stroke: #4d6185; stroke-width: 2; }
.hscroll-off .sb-btn { background: #f1efe6; border-color: #fff; }
.hscroll-off .sb-arrow { stroke: #aca899; }
.sb-thumb { width: 290px; margin-left: 2px; display: flex; align-items: center; justify-content: center; background: linear-gradient(#d4e0fd, #b9cdf9 70%, #c9d8fc); border: 1px solid #fff; border-radius: 2px; }
.sb-thumb i { width: 8px; height: 7px; background: repeating-linear-gradient(90deg, #6f87c0 0 1px, #eef3ff 1px 2px); }
.vscroll { width: 14px; height: 473px; margin: 0 1px 0 2px; display: flex; flex-direction: column; background: linear-gradient(90deg, #f3f1e7, #fff 50%, #f0efe6); }
.vscroll .sb-btn { width: 14px; }
.vscroll .sb-track { flex: 1; }
.sb-thumb-v { height: 256px; margin-top: 1px; flex: none; display: flex; align-items: center; justify-content: center; background: linear-gradient(90deg, #d4e0fd, #b9cdf9 70%, #c9d8fc); border: 1px solid #fff; border-radius: 2px; }
.sb-thumb-v i { width: 7px; height: 8px; background: repeating-linear-gradient(#6f87c0 0 1px, #eef3ff 1px 2px); }

/* lower half */
.lower { height: 162px; padding-left: 26px; }
.doc-tabs { height: 25px; }
.doc-tab { width: 626px; height: 25px; display: flex; align-items: center; padding: 0 7px 2px 5px; border-bottom: 2px solid #2a5bb5; border-right: 1px solid #aca899; }
.doc-name { flex: 1; text-align: center; }
.doc-close { width: 14px; height: 15px; display: flex; align-items: center; justify-content: center; background: #e2603f; border: 1px solid #c9c2b0; border-radius: 1px; }
.split-dots { height: 6px; margin: 0 424px 0 416px; background: radial-gradient(circle at 1px 2px, #cfccbc 1px, transparent 1.2px) 0 0 / 3px 6px; }
.log-head { height: 19px; display: flex; align-items: center; padding: 0 2px 0 4px; border-top: 1px solid #aca899; border-bottom: 1px solid #aca899; margin-bottom: 1px; }
.log-title { font-size: 10px; letter-spacing: -0.1px; margin-top: -2px; }
.log-ctl { margin-left: auto; display: flex; gap: 3px; }
.log-body { height: 88px; background: #fff; border: 1px solid #7f9db9; }
.log-tabs { height: 23px; display: flex; font-size: 10.2px; line-height: 18px; }
.log-tab { height: 22px; padding-bottom: 2px; display: flex; align-items: center; background: linear-gradient(#fff, #f4f3ec 60%, #ece9d8); border: 1px solid #8fa8c8; border-top: 0; border-radius: 0 0 3px 3px; flex: none; }
.log-tab-on { width: 119px; height: 23px; padding-left: 6px; padding-bottom: 0; gap: 10px; font-size: 10px; background: #fff; border: 0; border-bottom: 2px solid #f0a830; border-radius: 0; }
.log-tab-bp { width: 96px; padding-left: 6px; gap: 12px; margin-right: 2px; }
.bp-dot { width: 11px; height: 11px; border-radius: 50%; background: radial-gradient(circle at 40% 35%, #e62a2a, #a00000); flex: none; }
.log-tab-find { width: 132px; padding-left: 4px; gap: 10px; margin-right: 3px; }
.log-tab-search { width: 109px; padding-left: 2px; gap: 11px; }

.status { height: 27px; display: flex; justify-content: flex-end; padding: 3px 2px 3px 0; }
.sim-time { width: 119px; height: 21px; line-height: 19px; padding-left: 3px; border: 1px solid #aca899; white-space: nowrap; font-size: 10.5px; }
.taskbar { height: 4px; display: flex; background: #2663d0; }
.start { width: 93px; background: #3c8f3c; }
.tray { width: 111px; margin-left: auto; background: #0f8ee8; border-left: 1px solid #103a80; }
```

FILE: wave.js
```js
window.onload=function ()
{
	var oSvg=document.getElementById('wave');
	var NS='http://www.w3.org/2000/svg';
	var GREEN='#00f000';
	var RED='#ff0000';
	var DARK='#004a00';

	function add (tag,attrs,text) {
		var o=document.createElementNS(NS,tag);
		for(var k in attrs){
			o.setAttribute(k,attrs[k]);
		}
		if(text) o.textContent=text;
		oSvg.appendChild(o);
		return o;
	}

	function line (x1,y1,x2,y2,color,w) {
		add('line',{x1:x1,y1:y1,x2:x2,y2:y2,stroke:color,'stroke-width':w||2,'shape-rendering':'crispEdges'});
	}

	function rowY (i) { return 143+20*i; }

	// clk and req rows
	function clock (i) {
		var c=rowY(i), hi=c-7, lo=c+7;
		var d='M363 '+lo;
		add('rect',{x:362,y:hi,width:742,height:14,fill:DARK,'shape-rendering':'crispEdges'});
		for(var k=0;k<64;k++){
			var x=Math.round(362.5+k*11.67);
			var x2=Math.round(362.5+k*11.67+5.83);
			d+='L'+x+' '+lo+'L'+x+' '+hi+'L'+x2+' '+hi+'L'+x2+' '+lo;
		}
		d+='L1260 '+lo;
		add('path',{d:d,fill:'none',stroke:GREEN,'stroke-width':2,'shape-rendering':'crispEdges'});
		for(var n=0;n<4;n++){
			add('rect',{x:1112,y:hi+2+n*3,width:1,height:1,fill:GREEN});
		}
	}

	function seg (i,x0,x1,color,label,cx) {
		var c=rowY(i), t=c-7, b=c+7;
		var p=[x0,c,x0+4,t,x1-4,t,x1,c,x1-4,b,x0+4,b].join(' ');
		add('polygon',{points:p,fill:'none',stroke:color,'stroke-width':2});
		if(label){
			add('text',{x:cx||(x0+x1)/2,y:c+4,'text-anchor':'middle'},label);
		}
	}

	// a bus that toggles every 23.33px, "0..." on the marked segments
	function busy (i,start,count,marks,lastLabel,lastX) {
		var x=start;
		for(var k=0;k<count;k++){
			seg(i,x,x+23.33,GREEN,marks.indexOf(k)>=0?'0...':'...');
			x+=23.33;
		}
		seg(i,x+0.5,1259,GREEN,lastLabel,lastX);
	}

	var Z32='00000000000000000000000000000000';

	clock(0);
	clock(1);

	// ack
	add('rect',{x:1113,y:176,width:147,height:14,fill:DARK});
	add('path',{d:'M362 190H1113V176H1260',fill:'none',stroke:GREEN,'stroke-width':2,'shape-rendering':'crispEdges'});

	seg(3,364,389,RED,'X...',375);
	seg(3,391,1259,GREEN,Z32.slice(1)+'1',824);
	seg(4,364,400,RED,'XXX...',381);
	seg(4,402,1259,GREEN,Z32.slice(2)+'10',829);
	seg(5,364,423,RED,'XXXXXXX...',392);
	busy(5,425,29,[0,3,6,9,11,14,17,20,23,26],'010000000000000000000000...',1182);
	seg(6,363,1259,GREEN,Z32,810);
	seg(7,363,1259,GREEN,Z32,810);
	seg(8,364,405,RED,'XXXX...',383);
	busy(8,406.7,30,[0,3,6,8,11,14,17,20,23,26,29],'10000000000000000000000...',1185);
	seg(9,363,1259,GREEN,'0000',810);
	seg(10,364,375,RED);
	seg(10,376,1259,GREEN,'0001',816);
	seg(11,364,407,RED,'XXXX',384);
	seg(11,409,1259,GREEN,'0010',833);
	seg(12,363,1110,RED,'XXXX',735);
	seg(12,1112,1259,GREEN,'0011',1184);
	seg(13,364,387,RED,'X...',375);
	seg(13,389,1259,GREEN,'0000',822);
	seg(14,364,398,RED,'XXXX',379);
	seg(14,400,1259,GREEN,'0001',828);
	seg(15,364,423,RED,'XXXX',391);
	seg(15,425,1259,GREEN,'0010',840);
	add('rect',{x:363,y:456,width:5,height:14,fill:'url(#hatch)'});
	seg(16,368,1259,GREEN,Z32.slice(1)+'1',812);
	seg(17,364,378,RED);
	seg(17,380,1259,GREEN,Z32.slice(2)+'10',818);

	// ruler
	line(362,132,1261,132,'#fff',1);
	for(var t=0;t<=50;t++){
		var tx=Math.round(362+t*17.96);
		var h=t%10==0?16:(t%5==0?8:4);
		line(tx,132-h,tx,132,'#fff',1);
	}
	var aLabels=['0 ns','200 ns','400 ns','600 ns','800 ns'];
	for(var n=0;n<aLabels.length;n++){
		add('text',{x:Math.round(362+n*179.6)+2,y:124,'class':'ruler-txt'},aLabels[n]);
	}

	// grid
	for(var g=0;g<=5;g++){
		var gx=Math.round(362+g*179.6);
		line(gx,133,gx,492,'#c0c0c0',1);
	}
	line(362,492,1261,492,'#d8d8d8',1);

	// cursor
	line(1107,92,1107,493,'#ffff00',2);
	add('rect',{x:1106.5,y:76.5,width:58,height:14,fill:'#000',stroke:'#ff0','shape-rendering':'crispEdges'});
	add('text',{x:1108,y:88,'class':'cur-txt'},'830.000 ns');

	add('text',{x:367,y:523,'class':'ruler-txt'},'X1: 830.000 ns');
};
```
